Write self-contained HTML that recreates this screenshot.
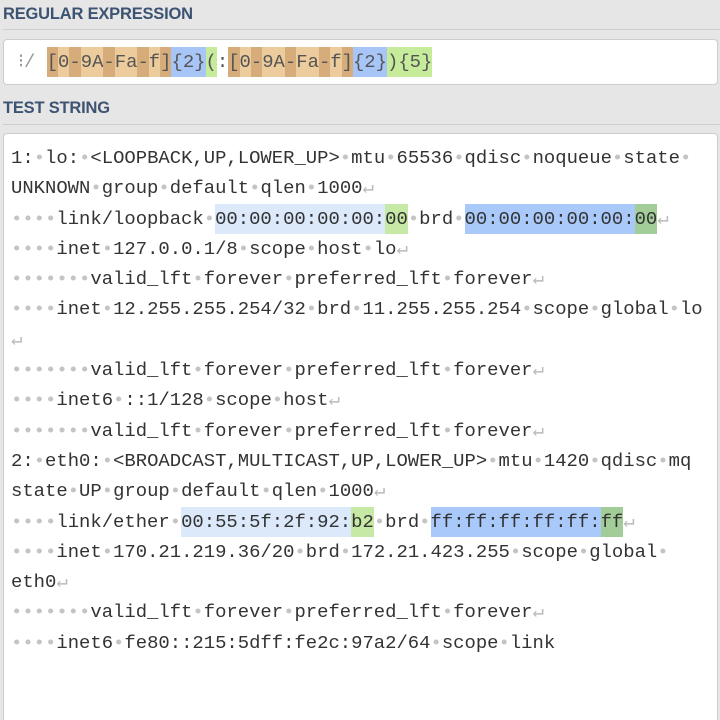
<!DOCTYPE html>
<html><head><meta charset="utf-8"><style>
*{margin:0;padding:0;box-sizing:border-box}
html,body{width:720px;height:720px;overflow:hidden}
body{background:#e6e6e6;font-family:"Liberation Sans",sans-serif;position:relative}
.h{position:absolute;left:3px;font-size:16.5px;font-weight:bold;color:#3d5372;letter-spacing:-0.2px}
.hr{position:absolute;left:3px;right:0;height:1px;background:#cfcfcf}
.box{position:absolute;left:3px;right:2px;background:#fff;border:1px solid #cdcdcd;border-radius:4px}
.mono{font-family:"Liberation Mono","DejaVu Sans Mono",monospace;font-size:18.9px;color:#333}
.l{height:30.3px;line-height:30.3px;white-space:pre}
.w{color:#c4c4c4}
.r{color:#bbb}
span.b{padding:4px 0}
.m1{background:#dbe9fb}.g1{background:#c6e9a6}.m2{background:#a9c9fa}.g2{background:#a2cd98}
.cl{background:#eccb9c}.cd{background:#d6ad7a}.q{background:#a8c5f8}.gr{background:#c5eb9b}
</style></head><body>
<div class="h" style="top:5px">REGULAR EXPRESSION</div>
<div class="hr" style="top:29px"></div>
<div class="box" style="top:39px;height:46px">
<div class="mono l" style="position:absolute;left:14px;top:7px;color:#555"><span style="color:#999">⁝</span><span style="color:#999">/</span> <span class="b cd">[</span><span class="b cl">0</span><span class="b cd">-</span><span class="b cl">9A</span><span class="b cd">-</span><span class="b cl">Fa</span><span class="b cd">-</span><span class="b cl">f</span><span class="b cd">]</span><span class="b q">{2}</span><span class="b gr">(</span>:<span class="b cd">[</span><span class="b cl">0</span><span class="b cd">-</span><span class="b cl">9A</span><span class="b cd">-</span><span class="b cl">Fa</span><span class="b cd">-</span><span class="b cl">f</span><span class="b cd">]</span><span class="b q">{2}</span><span class="b gr">){5}</span></div>
</div>
<div class="h" style="top:99px">TEST STRING</div>
<div class="hr" style="top:124px"></div>
<div class="box" style="top:133px;height:600px">
<div class="mono" style="position:absolute;left:7px;top:9px">
<div class="l">1:<span class="w">•</span>lo:<span class="w">•</span>&lt;LOOPBACK,UP,LOWER_UP&gt;<span class="w">•</span>mtu<span class="w">•</span>65536<span class="w">•</span>qdisc<span class="w">•</span>noqueue<span class="w">•</span>state<span class="w">•</span></div>
<div class="l">UNKNOWN<span class="w">•</span>group<span class="w">•</span>default<span class="w">•</span>qlen<span class="w">•</span>1000<span class="r">↵</span></div>
<div class="l"><span class="w">••••</span>link/loopback<span class="w">•</span><span class="b m1">00:00:00:00:00:</span><span class="b g1">00</span><span class="w">•</span>brd<span class="w">•</span><span class="b m2">00:00:00:00:00:</span><span class="b g2">00</span><span class="r">↵</span></div>
<div class="l"><span class="w">••••</span>inet<span class="w">•</span>127.0.0.1/8<span class="w">•</span>scope<span class="w">•</span>host<span class="w">•</span>lo<span class="r">↵</span></div>
<div class="l"><span class="w">•••••••</span>valid_lft<span class="w">•</span>forever<span class="w">•</span>preferred_lft<span class="w">•</span>forever<span class="r">↵</span></div>
<div class="l"><span class="w">••••</span>inet<span class="w">•</span>12.255.255.254/32<span class="w">•</span>brd<span class="w">•</span>11.255.255.254<span class="w">•</span>scope<span class="w">•</span>global<span class="w">•</span>lo</div>
<div class="l"><span class="r">↵</span></div>
<div class="l"><span class="w">•••••••</span>valid_lft<span class="w">•</span>forever<span class="w">•</span>preferred_lft<span class="w">•</span>forever<span class="r">↵</span></div>
<div class="l"><span class="w">••••</span>inet6<span class="w">•</span>::1/128<span class="w">•</span>scope<span class="w">•</span>host<span class="r">↵</span></div>
<div class="l"><span class="w">•••••••</span>valid_lft<span class="w">•</span>forever<span class="w">•</span>preferred_lft<span class="w">•</span>forever<span class="r">↵</span></div>
<div class="l">2:<span class="w">•</span>eth0:<span class="w">•</span>&lt;BROADCAST,MULTICAST,UP,LOWER_UP&gt;<span class="w">•</span>mtu<span class="w">•</span>1420<span class="w">•</span>qdisc<span class="w">•</span>mq</div>
<div class="l">state<span class="w">•</span>UP<span class="w">•</span>group<span class="w">•</span>default<span class="w">•</span>qlen<span class="w">•</span>1000<span class="r">↵</span></div>
<div class="l"><span class="w">••••</span>link/ether<span class="w">•</span><span class="b m1">00:55:5f:2f:92:</span><span class="b g1">b2</span><span class="w">•</span>brd<span class="w">•</span><span class="b m2">ff:ff:ff:ff:ff:</span><span class="b g2">ff</span><span class="r">↵</span></div>
<div class="l"><span class="w">••••</span>inet<span class="w">•</span>170.21.219.36/20<span class="w">•</span>brd<span class="w">•</span>172.21.423.255<span class="w">•</span>scope<span class="w">•</span>global<span class="w">•</span></div>
<div class="l">eth0<span class="r">↵</span></div>
<div class="l"><span class="w">•••••••</span>valid_lft<span class="w">•</span>forever<span class="w">•</span>preferred_lft<span class="w">•</span>forever<span class="r">↵</span></div>
<div class="l"><span class="w">••••</span>inet6<span class="w">•</span>fe80::215:5dff:fe2c:97a2/64<span class="w">•</span>scope<span class="w">•</span>link</div>
</div>
</div>
</body></html>
